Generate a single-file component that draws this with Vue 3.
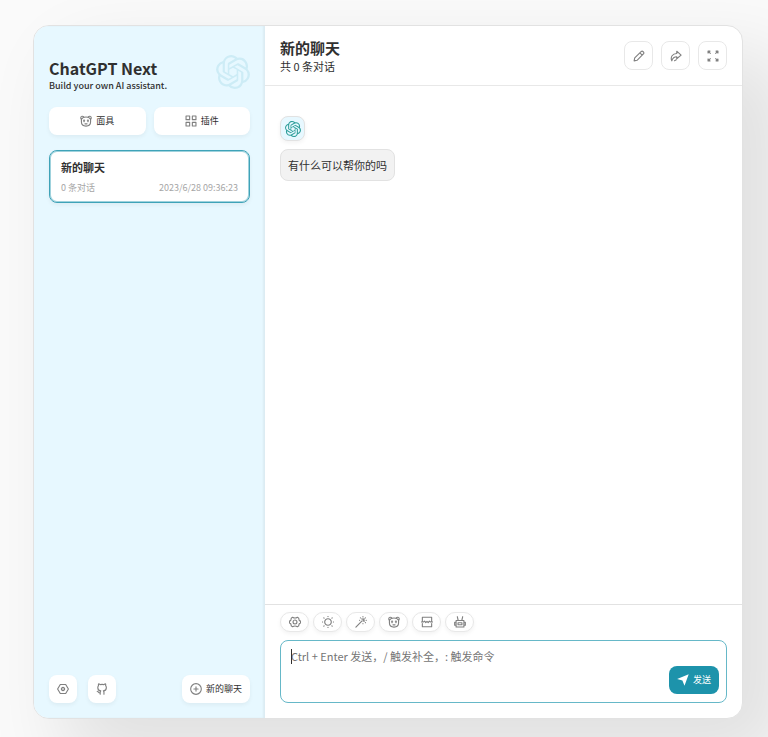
<script setup>
import { ref, onMounted } from 'vue'

const knot =
  'M22.2819 9.8211a5.9847 5.9847 0 0 0-.5157-4.9108 6.0462 6.0462 0 0 0-6.5098-2.9A6.0651 6.0651 0 0 0 4.9807 4.1818a5.9847 5.9847 0 0 0-3.9977 2.9 6.0462 6.0462 0 0 0 .7427 7.0966 5.98 5.98 0 0 0 .511 4.9107 6.051 6.051 0 0 0 6.5146 2.9001A5.9847 5.9847 0 0 0 13.2599 24a6.0557 6.0557 0 0 0 5.7718-4.2058 5.9894 5.9894 0 0 0 3.9977-2.9001 6.0557 6.0557 0 0 0-.7475-7.0729zm-9.022 12.6081a4.4755 4.4755 0 0 1-2.8764-1.0408l.1419-.0804 4.7783-2.7582a.7948.7948 0 0 0 .3927-.6813v-6.7369l2.02 1.1686a.071.071 0 0 1 .038.052v5.5826a4.504 4.504 0 0 1-4.4945 4.4944zm-9.6607-4.1254a4.4708 4.4708 0 0 1-.5346-3.0137l.142.0852 4.783 2.7582a.7712.7712 0 0 0 .7806 0l5.8428-3.3685v2.3324a.0804.0804 0 0 1-.0332.0615L9.74 19.9502a4.4992 4.4992 0 0 1-6.1408-1.6464zM2.3408 7.8956a4.485 4.485 0 0 1 2.3655-1.9728V11.6a.7664.7664 0 0 0 .3879.6765l5.8144 3.3543-2.0201 1.1685a.0757.0757 0 0 1-.071 0l-4.8303-2.7865A4.504 4.504 0 0 1 2.3408 7.872zm16.5963 3.8558L13.1038 8.364 15.1192 7.2a.0757.0757 0 0 1 .071 0l4.8303 2.7913a4.4944 4.4944 0 0 1-.6765 8.1042v-5.6772a.79.79 0 0 0-.407-.667zm2.0107-3.0231l-.142-.0852-4.7735-2.7818a.7759.7759 0 0 0-.7854 0L9.409 9.2297V6.8974a.0662.0662 0 0 1 .0284-.0615l4.8303-2.7866a4.4992 4.4992 0 0 1 6.6802 4.66zM8.3065 12.863l-2.02-1.1638a.0804.0804 0 0 1-.038-.0567V6.0742a4.4992 4.4992 0 0 1 7.3757-3.4537l-.142.0805L8.704 5.459a.7948.7948 0 0 0-.3927.6813zm1.0976-2.3654l2.602-1.4998 2.6069 1.4998v2.9994l-2.5974 1.4997-2.6067-1.4997Z'

// Outline icons on a 16-unit grid, drawn with a stroke.
const icons = {
  mask: 'M5 2.8C4.2 1.2 1 1 1 3.8C1 4.8 1.3 5.6 1.9 6M11 2.8C11.8 1.2 15 1 15 3.8C15 4.8 14.7 5.6 14.1 6M1.9 5.6C3 3.4 5.4 2.6 8 2.6C10.6 2.6 13 3.4 14.1 5.6V9.4C14.1 12.8 11.8 14.8 8 14.8C4.2 14.8 1.9 12.8 1.9 9.4ZM5.4 6.4V9M10.6 6.4V9M4.6 7.7H6.2M9.8 7.7H11.4M6.6 11.8H9.4',
  plugin: 'M1.4 1.4H6.2V6.2H1.4ZM9.8 1.4H14.6V6.2H9.8ZM1.4 9.8H6.2V14.6H1.4ZM9.8 9.8H14.6V14.6H9.8Z',
  hexagon: 'M4.4 2H11.6L15.2 8L11.6 14H4.4L.8 8ZM8 5.8A2.2 2.2 0 1 1 8 10.2A2.2 2.2 0 1 1 8 5.8ZM7.7 8H8.3',
  github: 'M5.6 15V12.2C5.6 11.2 6 10.8 6.4 10.4C3.8 10.2 2.4 9 2.4 6.2C2.4 5.1 2.8 4.2 3.4 3.6C3.1 2.8 3.1 1.9 3.4 1.1C4.4 1.1 5.2 1.7 5.9 2.2C7.3 1.8 8.9 1.8 10.3 2.2C11 1.7 11.8 1.1 12.8 1.1C13.1 1.9 13.1 2.8 12.8 3.6C13.4 4.2 13.8 5.1 13.8 6.2C13.8 9 12.4 10.2 9.8 10.4C10.3 10.8 10.6 11.3 10.6 12.2V15M5.6 13.3C3.2 13.9 3.4 11.2 1.6 11',
  add: 'M8 .9A7.1 7.1 0 1 1 8 15.1A7.1 7.1 0 1 1 8 .9ZM8 5.2V10.8M5.2 8H10.8',
  pencil: 'M1.5 14.5L2.3 10.6L10.8 2.1C11.6 1.3 12.6 1.3 13.3 2L14 2.7C14.7 3.4 14.7 4.4 13.9 5.2L5.4 13.7ZM9.3 3.8L12.2 6.7',
  share: 'M9 1.6L14.8 6.8L9 11.6V9C5.6 9 3.6 10.4 2.4 14.4C.2 9.4 3.4 4.8 9 4.6ZM6 14.2L8.4 13',
  expand: 'M1.4 4V1.4H4ZM2.8 2.8L4.4 4.4M12 1.4H14.6V4ZM13.2 2.8L11.6 4.4M1.4 12V14.6H4ZM2.8 13.2L4.4 11.6M12 14.6H14.6V12ZM13.2 13.2L11.6 11.6',
  gear: 'M4.8 1.6Q8 3.8 11.2 1.6L13 2.8Q12.8 6 15.4 6.8V9.2Q12.8 10 13 13.2L11.2 14.4Q8 12.2 4.8 14.4L3 13.2Q3.2 10 .6 9.2V6.8Q3.2 6 3 2.8ZM8 5.4A2.6 2.6 0 1 1 8 10.6A2.6 2.6 0 1 1 8 5.4Z',
  sun: 'M8 3.6A4.4 4.4 0 1 1 8 12.4A4.4 4.4 0 1 1 8 3.6ZM8 .2V.8M8 15.2V15.8M.2 8H.8M15.2 8H15.8M2.4 2.4L2.8 2.8M13.2 13.2L13.6 13.6M13.6 2.4L13.2 2.8M2.8 13.2L2.4 13.6',
  wand: 'M1.2 14.8L9.4 6.6M10.6 .8V1.2M7.2 2.4L7.4 2.6M14 2.4L13.8 2.6M15.2 5.6H14.8M6 5.6H6.2M13.8 8.8L14 9M10.6 10.2V10.4M9 3.8L10.6 4.4L12.2 3.6L11.8 5.4L12.4 7L10.8 6.6',
  split: 'M1.8 7.2V1.6H14.2V7.2M1.8 10V14.4H14.2V10M.6 8H3.2L4.8 6.8L6.4 8.8L8 7.2L9.6 8.8L11.2 6.8L12.8 8H15.4',
  robot: 'M2.8 6H13.2V14.6H2.8ZM2.8 8.4H.9V12.4H2.8M13.2 8.4H15.1V12.4H13.2M5.6 6L4.4 .9M10.4 6L11.6 .9M5.4 9H10.6V11.6H5.4Z',
}

const headerActions = [
  { icon: 'pencil', label: '编辑' },
  { icon: 'share', label: '分享' },
  { icon: 'expand', label: '全屏' },
]
const chatActions = [
  { icon: 'gear', label: '对话设置' },
  { icon: 'sun', label: '亮色模式' },
  { icon: 'wand', label: '快捷指令' },
  { icon: 'mask', label: '所有面具' },
  { icon: 'split', label: '清除聊天' },
  { icon: 'robot', label: '模型' },
]

const draft = ref('')
const input = ref(null)
onMounted(() => input.value.focus())
</script>

<template>
  <div class="page">
    <div class="window">
      <aside class="sidebar">
        <header class="brand">
          <div>
            <h1>ChatGPT Next</h1>
            <p>Build your own AI assistant.</p>
          </div>
          <svg class="brand-logo" viewBox="0 0 24 24" aria-hidden="true"><path :d="knot" /></svg>
        </header>

        <nav class="shortcuts">
          <button type="button" class="soft-button">
            <svg class="icon" viewBox="0 0 16 16"><path :d="icons.mask" /></svg>
            <span>面具</span>
          </button>
          <button type="button" class="soft-button">
            <svg class="icon" viewBox="0 0 16 16"><path :d="icons.plugin" /></svg>
            <span>插件</span>
          </button>
        </nav>

        <a class="chat-item" href="#chat">
          <strong>新的聊天</strong>
          <span class="chat-info"><span>0 条对话</span><span>2023/6/28 09:36:23</span></span>
        </a>

        <footer class="tail">
          <button type="button" class="soft-button square" aria-label="设置">
            <svg class="icon" viewBox="0 0 16 16"><path :d="icons.hexagon" /></svg>
          </button>
          <a class="soft-button square" href="#github" aria-label="GitHub">
            <svg class="icon" viewBox="0 0 16 16"><path :d="icons.github" /></svg>
          </a>
          <button type="button" class="soft-button new-chat">
            <svg class="icon" viewBox="0 0 16 16"><path :d="icons.add" /></svg>
            <span>新的聊天</span>
          </button>
        </footer>
      </aside>

      <main class="chat">
        <header class="chat-header">
          <div class="chat-heading">
            <h2>新的聊天</h2>
            <p>共 0 条对话</p>
          </div>
          <button
            v-for="action in headerActions"
            :key="action.icon"
            type="button"
            class="header-button"
            :aria-label="action.label"
          >
            <svg class="icon" viewBox="0 0 16 16"><path :d="icons[action.icon]" /></svg>
          </button>
        </header>

        <section class="messages">
          <div class="avatar">
            <svg viewBox="0 0 24 24" aria-hidden="true"><path :d="knot" /></svg>
          </div>
          <p class="bubble">有什么可以帮你的吗</p>
        </section>

        <section class="composer">
          <div class="chat-actions">
            <button
              v-for="action in chatActions"
              :key="action.icon"
              type="button"
              class="pill"
              :aria-label="action.label"
            >
              <svg class="icon" viewBox="0 0 16 16"><path :d="icons[action.icon]" /></svg>
            </button>
          </div>
          <form class="input-wrap" @submit.prevent>
            <textarea
              ref="input"
              v-model="draft"
              :class="{ empty: !draft }"
              aria-label="消息"
              placeholder="Ctrl + Enter 发送，/ 触发补全，: 触发命令"
            ></textarea>
            <span v-if="!draft" class="caret" aria-hidden="true"></span>
            <button type="submit" class="send">
              <svg viewBox="0 0 16 16" aria-hidden="true"><path d="M15.6 .4L.2 6.6L7.2 8.8L10 15.6Z" /></svg>
              <span>发送</span>
            </button>
          </form>
        </section>
      </main>
    </div>
  </div>
</template>

<style>
body {
  margin: 0;
  background: #fafafa;
}
</style>

<style scoped>
.page {
  box-sizing: border-box;
  display: flex;
  min-height: 100vh;
  padding: 25px 25px 18px 33px;
  overflow: hidden;
  color: #303030;
  font-family: "Noto Sans CJK SC", sans-serif;
}
.page * {
  box-sizing: border-box;
}
h1,
h2,
p {
  margin: 0;
}
button,
textarea {
  font-family: inherit;
  color: inherit;
}
a {
  color: inherit;
  text-decoration: none;
}
.window {
  flex: 1;
  display: flex;
  overflow: hidden;
  background: #fff;
  border: 1px solid #e2e2e2;
  border-radius: 16px;
  box-shadow: 38px 38px 77px 8px rgba(0, 0, 0, 0.1);
}
.icon {
  flex: none;
  width: 12px;
  height: 12px;
  fill: none;
  stroke: #808080;
  stroke-width: 1.5;
  stroke-linejoin: round;
  stroke-linecap: round;
}

.sidebar {
  flex: none;
  display: flex;
  flex-direction: column;
  width: 231px;
  padding: 15px;
  background: #e7f8ff;
  box-shadow: inset -2px 0 2px rgba(0, 0, 0, 0.05);
}
.brand {
  display: flex;
  justify-content: space-between;
  padding: 14px 0 15px;
}
h1 {
  padding-top: 2px;
  font-size: 16px;
  line-height: 22px;
  font-weight: 700;
}
.brand p {
  font-size: 9px;
  line-height: 13px;
  font-weight: 500;
}
.brand-logo {
  width: 34px;
  height: 34px;
  fill: #cdecf6;
}
.shortcuts {
  display: grid;
  grid-template-columns: 1fr 1fr;
  gap: 8px;
}
.soft-button {
  display: flex;
  align-items: center;
  justify-content: center;
  gap: 4px;
  height: 28px;
  padding: 0 8px;
  border: 0;
  border-radius: 8px;
  background: #fff;
  box-shadow: 0 2px 4px rgba(0, 0, 0, 0.05);
  font-size: 9px;
  line-height: 14px;
}
.square {
  width: 28px;
}
.chat-item {
  display: flex;
  flex-direction: column;
  gap: 6px;
  margin-top: 15px;
  padding: 8px 11px;
  border: 1px solid #3fa3b8;
  border-radius: 8px;
  background: #fff;
  box-shadow: inset 0 0 0 1px #9fd2dd, 0 2px 4px rgba(0, 0, 0, 0.05);
}
.chat-item strong {
  font-size: 11px;
  line-height: 16px;
}
.chat-info {
  display: flex;
  justify-content: space-between;
  color: #a6a6a6;
  font-size: 9px;
  line-height: 13px;
}
.tail {
  display: flex;
  gap: 11px;
  margin-top: auto;
}
.new-chat {
  margin-left: auto;
}

.chat {
  flex: 1;
  display: flex;
  flex-direction: column;
  min-width: 0;
}
.chat-header {
  display: flex;
  align-items: center;
  gap: 8px;
  height: 60px;
  padding: 0 15px;
  border-bottom: 1px solid #e8e8e8;
}
.chat-heading {
  flex: 1;
}
h2 {
  font-size: 15px;
  line-height: 21px;
}
.chat-heading p {
  font-size: 11px;
  line-height: 16px;
}
.header-button {
  display: grid;
  place-items: center;
  width: 29px;
  height: 29px;
  padding: 0;
  border: 1px solid #e8e8e8;
  border-radius: 8px;
  background: #fff;
}
.messages {
  flex: 1;
  display: flex;
  flex-direction: column;
  align-items: flex-start;
  gap: 8px;
  padding: 30px 15px;
}
.avatar {
  display: grid;
  place-items: center;
  width: 25px;
  height: 25px;
  border: 1px solid #e2e2e2;
  border-radius: 8px;
  background: #e7f8ff;
  box-shadow: 0 2px 4px rgba(0, 0, 0, 0.05);
}
.avatar svg {
  width: 16px;
  height: 16px;
  fill: #2f9f9b;
}
.bubble {
  padding: 6px 7px;
  border: 1px solid #e2e2e2;
  border-radius: 8px;
  background: #f2f2f2;
  font-size: 11px;
  line-height: 18px;
}
.composer {
  display: flex;
  flex-direction: column;
  gap: 8px;
  padding: 7px 15px 15px;
  border-top: 1px solid #e2e2e2;
}
.chat-actions {
  display: flex;
  gap: 4px;
}
.pill {
  display: grid;
  place-items: center;
  width: 29px;
  height: 20px;
  padding: 0;
  border: 1px solid #e8e8e8;
  border-radius: 10px;
  background: #fff;
  box-shadow: 0 2px 4px rgba(0, 0, 0, 0.05);
}
.input-wrap {
  position: relative;
  display: flex;
  align-items: flex-end;
  height: 63px;
  padding-right: 7px;
  border: 1px solid #66b8c8;
  border-radius: 8px;
}
textarea {
  flex: 1;
  align-self: stretch;
  min-width: 0;
  padding: 7px 10px;
  border: 0;
  outline: 0;
  background: transparent;
  resize: none;
  font-size: 11px;
  line-height: 17px;
}
textarea.empty {
  caret-color: transparent;
}
textarea::placeholder {
  color: #757575;
}
.caret {
  position: absolute;
  top: 8px;
  left: 10px;
  width: 1px;
  height: 15px;
  background: #303030;
}
.send {
  display: flex;
  align-items: center;
  gap: 4px;
  height: 28px;
  margin-bottom: 8px;
  padding: 0 8px;
  border: 0;
  border-radius: 8px;
  background: #1d93ab;
  color: #fff;
  font-size: 9px;
  line-height: 14px;
}
.send svg {
  width: 12px;
  height: 12px;
  fill: #fff;
}
</style>
